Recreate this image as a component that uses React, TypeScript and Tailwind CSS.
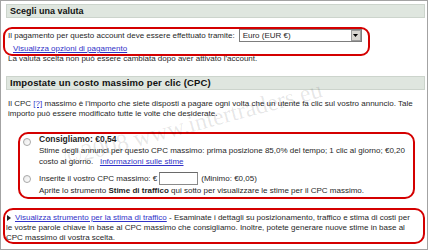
export default function App() {
  const red = "border-2 border-[#d40000]";
  return (
    <div className="relative w-[430px] h-[251px] bg-white overflow-hidden font-['Liberation_Sans',Arial,sans-serif] text-[8px] text-[#1f1f1f]">
      <div className="flex flex-col w-[428px] h-[250px] border border-[#a3a3a3] pt-[3px] pl-[5px] pr-[2px]">
        <div className="shrink-0 h-[14px] bg-[#dfe6df] border border-[#ccd4cc] pl-[3px] text-[9px] font-bold leading-[12px] text-[#111]">
          Scegli una valuta
        </div>

        <div className={`shrink-0 ml-[-3px] mt-[9px] w-[367px] h-[29px] ${red} rounded-[9px] pl-[3px]`}>
          <div className="flex items-center h-[13px]">
            <span className="leading-[13px] whitespace-nowrap">Il pagamento per questo account deve essere effettuato tramite:</span>
            <div className="ml-[4px] w-[123px] h-[13px] border border-[#7d7d7d] flex items-center bg-white">
              <span className="flex-1 pl-[3px] leading-[11px]">Euro (EUR €)</span>
              <div className="w-[10px] h-[11px] bg-[#d8d5d0] border border-[#9c9c9c] flex items-center justify-center">
                <svg width="5" height="3" viewBox="0 0 5 3"><polygon points="0,0 5,0 2.5,3" fill="#000" /></svg>
              </div>
            </div>
          </div>
          <div className="pl-[5px] mt-[1px] leading-[11px]">
            <span className="text-[#3232c8] underline">Visualizza opzioni di pagamento</span>
          </div>
        </div>

        <div className="shrink-0 mt-[-2px] pl-[2px] leading-[10px] whitespace-nowrap">
          La valuta scelta non può essere cambiata dopo aver attivato l'account.
        </div>

        <div className="shrink-0 mt-[12px] h-[14px] bg-[#dfe6df] border border-[#ccd4cc] pl-[3px] text-[9.5px] tracking-[0.12px] font-bold leading-[12px] text-[#111]">
          Impostate un costo massimo per clic (CPC)
        </div>

        <div className="shrink-0 mt-[9px] pl-[2px] leading-[10px] whitespace-nowrap">
          Il CPC <span className="text-[#3232c8] underline">[?]</span> massimo è l'importo che siete disposti a pagare ogni volta che un utente fa clic sul vostro annuncio. Tale
          <br />
          importo può essere modificato tutte le volte che desiderate.
        </div>

        <div className={`shrink-0 mt-[13px] ml-[12px] w-[397px] h-[67px] ${red} rounded-[10px] pl-[3px]`}>
          <div className="flex">
            <div className="mt-[4px] w-[8px] h-[8px] rounded-full border border-[#a8a8a8] bg-gradient-to-br from-[#e8e8e8] to-white shrink-0" />
            <div className="ml-[8px] leading-[11px] whitespace-nowrap">
              <div className="font-bold text-[8.5px]">Consigliamo: €0,54</div>
              <div>Stime degli annunci per questo CPC massimo: prima posizione 85,0% del tempo; 1 clic al giorno; €0,20</div>
              <div>
                costo al giorno.&nbsp;&nbsp; <span className="text-[#3232c8] underline">Informazioni sulle stime</span>
              </div>
            </div>
          </div>
          <div className="flex mt-[5px]">
            <div className="mt-[3px] w-[8px] h-[8px] rounded-full border border-[#a8a8a8] bg-gradient-to-br from-[#e8e8e8] to-white shrink-0" />
            <div className="ml-[8px] whitespace-nowrap">
              <div className="flex items-center h-[13px]">
                <span>Inserite il vostro CPC massimo: €</span>
                <div className="ml-[2px] w-[39px] h-[13px] border border-[#8a8a8a] border-t-[#6a6a6a] bg-white" />
                <span className="ml-[3px]">(Minimo: €0,05)</span>
              </div>
              <div className="leading-[11px]">
                Aprite lo strumento <span className="font-bold">Stime di traffico</span> qui sotto per visualizzare le stime per il CPC massimo.
              </div>
            </div>
          </div>
        </div>

        <div className={`shrink-0 mt-[9px] ml-[-3px] w-[422px] h-[36px] ${red} rounded-[10px] pt-[3px] pl-[1px] leading-[10px] whitespace-nowrap`}>
          <div className="flex items-center">
            <svg width="4" height="6" viewBox="0 0 4 6" className="ml-[1px] mr-[4px]"><polygon points="0,0 4,3 0,6" fill="#222" /></svg>
            <span className="text-[#3232c8] underline">Visualizza strumento per la stima di traffico</span>
            <span>&nbsp;- Esaminate i dettagli su posizionamento, traffico e stima di costi per</span>
          </div>
          <div>le vostre parole chiave in base al CPC massimo che consigliamo. Inoltre, potete generare nuove stime in base al</div>
          <div>CPC massimo di vostra scelta.</div>
        </div>
      </div>

      <span className="pointer-events-none absolute left-[64px] top-[140px] -rotate-[15deg] origin-left font-['Liberation_Serif',serif] text-[24px] leading-[36px] text-black/10 whitespace-nowrap">
        ©2008 www.intertraders.eu
      </span>
    </div>
  );
}
